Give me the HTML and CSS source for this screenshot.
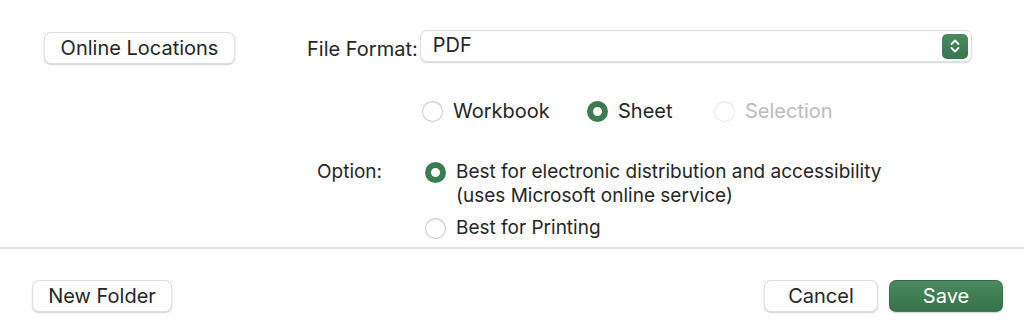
FILE: index.html
```html
<!DOCTYPE html>
<html>
<head>
<meta charset="utf-8">
<link rel="stylesheet" href="styles.css">
</head>
<body>
<div class="dialog">
  <div class="options">
    <div class="row-format">
      <button class="btn btn-online">Online Locations</button>
      <span class="label label-format">File Format:</span>
      <div class="popup">
        <span class="popup-value">PDF</span>
        <span class="stepper">
          <svg width="12" height="16" viewBox="0 0 12 16"><path d="M2.5 6 L6 2.5 L9.5 6 M2.5 10 L6 13.5 L9.5 10" fill="none" stroke="#fff" stroke-width="1.8" stroke-linecap="round" stroke-linejoin="round"/></svg>
        </span>
      </div>
    </div>

    <div class="row-scope">
      <label class="radio"><span class="dot"></span><span class="radio-text">Workbook</span></label>
      <label class="radio"><span class="dot on"></span><span class="radio-text">Sheet</span></label>
      <label class="radio disabled"><span class="dot"></span><span class="radio-text">Selection</span></label>
    </div>

    <div class="row-option">
      <span class="label label-option">Option:</span>
      <div class="option-list">
        <label class="radio radio-multi"><span class="dot on"></span><span class="radio-text">Best for electronic distribution and accessibility<br>(uses Microsoft online service)</span></label>
        <label class="radio"><span class="dot"></span><span class="radio-text">Best for Printing</span></label>
      </div>
    </div>
  </div>

  <div class="separator"></div>

  <div class="footer">
    <button class="btn btn-folder">New Folder</button>
    <div class="footer-right">
      <button class="btn btn-cancel">Cancel</button>
      <button class="btn btn-save">Save</button>
    </div>
  </div>
</div>
</body>
</html>
```

FILE: styles.css
```css
html, body {
  margin: 0;
  padding: 0;
  background: #ffffff;
}

body {
  font-family: "Inter", "Liberation Sans", sans-serif;
  font-size: 20px;
  color: #262626;
}

.dialog {
  width: 1024px;
  height: 331px;
  overflow: hidden;
}

.options {
  height: 247px;
  display: flex;
  flex-direction: column;
}

.btn {
  font-family: inherit;
  font-size: 20px;
  color: #262626;
  background: #ffffff;
  border: 0.5px solid rgba(0, 0, 0, 0.13);
  border-radius: 7px;
  box-shadow: 0 1px 1.5px rgba(0, 0, 0, 0.18);
  height: 32px;
  padding: 0;
  line-height: 30px;
  text-align: center;
}

.row-format {
  display: flex;
  align-items: flex-start;
  padding-top: 30px;
  height: 34px;
}

.btn-online {
  margin-left: 44px;
  margin-top: 2px;
  width: 191px;
}

.label-format {
  margin-left: 72px;
  line-height: 32px;
  margin-top: 3px;
}

.popup {
  margin-left: 2px;
  width: 552px;
  height: 32px;
  box-sizing: border-box;
  border: 0.5px solid rgba(0, 0, 0, 0.12);
  border-radius: 7px;
  box-shadow: 0 1px 1.5px rgba(0, 0, 0, 0.16);
  display: flex;
  align-items: center;
  justify-content: space-between;
  padding: 0 3px 0 12px;
}

.popup-value {
  margin-top: -3px;
}

.stepper {
  width: 26px;
  height: 25px;
  border-radius: 5px;
  background: linear-gradient(#4a8b5e, #387650);
  display: flex;
  align-items: center;
  justify-content: center;
}

.row-scope {
  display: flex;
  align-items: center;
  margin-top: 35px;
  padding-left: 422px;
  height: 24px;
}

.radio {
  display: flex;
  align-items: center;
}

.row-scope .radio:nth-child(1) { width: 165px; }
.row-scope .radio:nth-child(2) { width: 127px; }

.dot {
  width: 21px;
  height: 21px;
  box-sizing: border-box;
  border-radius: 50%;
  border: 0.5px solid rgba(0, 0, 0, 0.2);
  box-shadow: inset 0 1px 1px rgba(0, 0, 0, 0.06);
  background: #ffffff;
  flex: none;
}

.dot.on {
  border: 6.5px solid #3b7c50;
  box-shadow: none;
}

.radio-text {
  margin-left: 10px;
}

.row-scope .radio-text {
  margin-left: 10px;
}

.radio.disabled .radio-text {
  color: #bcbcbc;
}

.radio.disabled .dot {
  border-color: rgba(0, 0, 0, 0.08);
}

.row-option {
  display: flex;
  align-items: flex-start;
  margin-top: 39px;
  font-size: 19px;
}

.label-option {
  margin-left: 317px;
  width: 108px;
  line-height: 24px;
  margin-top: -2px;
}

.option-list {
  display: flex;
  flex-direction: column;
  gap: 8px;
}

.radio-multi {
  align-items: flex-start;
}

.option-list .radio-text {
  line-height: 24px;
  margin-left: 10px;
}

.radio-multi .radio-text {
  margin-top: -2px;
}

.separator {
  height: 2px;
  background: #e6e6e6;
}

.footer {
  display: flex;
  justify-content: space-between;
  align-items: flex-start;
  padding-top: 31px;
}

.btn-folder {
  margin-left: 32px;
  width: 140px;
}

.footer-right {
  display: flex;
  gap: 11px;
  margin-right: 21px;
}

.btn-cancel {
  width: 114px;
}

.btn-save {
  width: 114px;
  color: #ffffff;
  border-color: rgba(0, 0, 0, 0.1);
  background: linear-gradient(#4a8a5d, #36724a);
}
```
